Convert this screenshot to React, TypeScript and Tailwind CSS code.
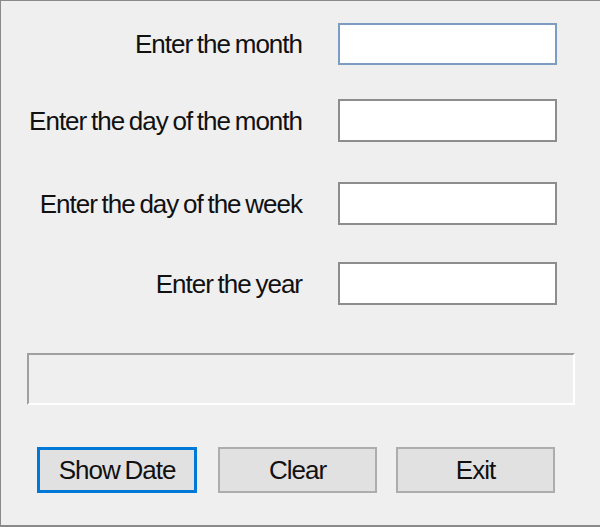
import React from "react";

const rows = [
  { label: "Enter the month", mt: "mt-0", h: "h-[42px]", focused: true },
  { label: "Enter the day of the month", mt: "mt-[34px]", h: "h-[43px]", focused: false },
  { label: "Enter the day of the week", mt: "mt-[40px]", h: "h-[43px]", focused: false },
  { label: "Enter the year", mt: "mt-[37px]", h: "h-[43px]", focused: false },
];

const txt = "text-[26px] leading-none tracking-[-1px] [word-spacing:-1.5px]";

export default function App() {
  return (
    <div className="w-[600px] h-[527px] bg-[#efeff0] border-l border-t border-b-2 border-[#8a8a8a] font-['Liberation_Sans',Arial,sans-serif] text-[#111111] overflow-hidden">
      <div className="pt-[22px] flex flex-col">
        {rows.map((r) => (
          <div key={r.label} className={`flex items-center ${r.mt}`}>
            <div className={`w-[301px] text-right ${txt}`}>{r.label}</div>
            <div
              className={`ml-[36px] w-[219px] ${r.h} bg-white border-2 ${
                r.focused ? "border-[#7c9cc2]" : "border-[#8d8d8d]"
              }`}
            />
          </div>
        ))}
      </div>
      <div className="ml-[26px] mt-[48px] w-[548px] h-[52px] border-2 border-t-[#a0a0a0] border-l-[#a0a0a0] border-r-white border-b-white" />
      <div className="flex ml-[36px] mt-[42px]">
        <button className={`w-[160px] h-[46px] bg-[#e1e1e1] border-[3px] border-[#0078d7] text-[#111111] flex items-center justify-center ${txt}`}>
          Show Date
        </button>
        <button className={`ml-[21px] w-[159px] h-[46px] bg-[#e1e1e1] border-2 border-[#adadad] text-[#111111] flex items-center justify-center ${txt}`}>
          Clear
        </button>
        <button className={`ml-[19px] w-[159px] h-[46px] bg-[#e1e1e1] border-2 border-[#adadad] text-[#111111] flex items-center justify-center ${txt}`}>
          Exit
        </button>
      </div>
    </div>
  );
}
